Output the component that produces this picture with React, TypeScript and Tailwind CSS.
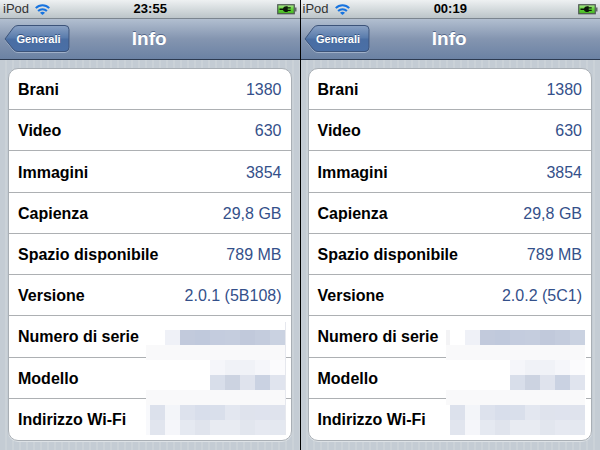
import { useId } from 'react'
import clsx from 'clsx'

interface Device {
  time: string
  version: string
  // mosaic cells hiding the private values, one class per 15px cell
  mosaic: string[][]
}

const ROWS_SHARED = [
  ['Brani', '1380'],
  ['Video', '630'],
  ['Immagini', '3854'],
  ['Capienza', '29,8 GB'],
  ['Spazio disponibile', '789 MB']
]

const W = 'bg-white'
const P = 'bg-[#f9f9fa]'

const pale = [P, P, P, P, P, P, P, P, P, P]
const modelTop = [W, W, W, W, W, 'bg-[#f5f6fa]', 'bg-[#f0f2f7]', 'bg-[#f0f2f7]', 'bg-[#f5f6fa]', 'bg-[#fbfbfd]']
const modelBottom = [W, W, W, W, W, 'bg-[#d8deea]', 'bg-[#ccd3e1]', 'bg-[#dfe3ed]', 'bg-[#cad2e2]', 'bg-[#e0e4ee]']
const wifiTop = ['bg-[#f8f9fc]', 'bg-[#dce1ec]', 'bg-[#f3f5f9]', 'bg-[#dde2ed]', 'bg-[#d8deeb]', 'bg-[#d9dfeb]', 'bg-[#e3e7f0]', 'bg-[#dfe3ed]', 'bg-[#dfe3ee]', 'bg-[#dfe3ed]']
const wifiBottom = ['bg-[#f8f9fc]', 'bg-[#e1e5ee]', 'bg-[#f5f6fa]', 'bg-[#e5e9f1]', 'bg-[#e0e4ed]', 'bg-[#e8ebf2]', 'bg-[#e8ebf2]', 'bg-[#e2e6ee]', 'bg-[#e6e9f1]', 'bg-[#e4e8f0]']
const serial = ['bg-[#eff1f7]', 'bg-[#c2cadc]', 'bg-[#c0c9dc]', 'bg-[#c4ccde]', 'bg-[#c5cdde]', 'bg-[#c1c9db]', 'bg-[#c4ccdd]', 'bg-[#cad2e1]']

const DEVICES: Device[] = [
  {
    time: '23:55',
    version: '2.0.1 (5B108)',
    mosaic: [[W, W, ...serial], pale, modelTop, modelBottom, pale, wifiTop, wifiBottom]
  },
  {
    time: '00:19',
    version: '2.0.2 (5C1)',
    mosaic: [['bg-[#f3f3f5]', W, ...serial], pale, modelTop, modelBottom, pale, [W, ...wifiTop.slice(1)], [W, ...wifiBottom.slice(1)]]
  }
]

function WifiIcon() {
  return (
    <svg width="15" height="11" viewBox="0 0 15 11" fill="none" stroke="#1673e0" strokeWidth="2" aria-label="Wi-Fi">
      <path d="M0.8 4.1C4.5 0.3 10.5 0.3 14.2 4.1" />
      <path d="M3.1 7C5.6 4.5 9.4 4.5 11.900 7" />
      <path d="M7.5 11L5 8.700C6.400 7.400 8.600 7.400 10 8.700Z" fill="#1673e0" stroke="none" />
    </svg>
  )
}

function BatteryIcon() {
  const id = useId()
  return (
    <svg width="20" height="11" viewBox="0 0 20 11" aria-label="Batteria in carica">
      <defs>
        <linearGradient id={id} x1="0" y1="0" x2="0" y2="1">
          <stop offset="0" stopColor="#b4ec96" />
          <stop offset="0.45" stopColor="#63d53a" />
          <stop offset="1" stopColor="#44b51f" />
        </linearGradient>
      </defs>
      <rect x="0.75" y="0.75" width="16.5" height="9" fill={`url(#${id})`} stroke="#4b5550" strokeWidth="1.2" />
      <path d="M18 3.5h1.5v4H18z" fill="#626a66" />
      <path d="M2.500 4.600h3.500c.6-1.500 1.700-2.300 3.200-2.300h1.500v1h3v1.200h-3v1.300h3V7h-3v1.100H9.200c-1.500 0-2.600-.8-3.200-2.200H2.500z" fill="#0b1608" />
    </svg>
  )
}

function BackButton() {
  const id = useId()
  return (
    <button type="button" className="relative h-7 w-[66px] pl-[3px] text-center text-[11px] font-bold text-white [text-shadow:0_-1px_0_#33507d]">
      <svg className="absolute inset-0" width="66" height="28" viewBox="0 0 66 28" aria-hidden="true">
        <defs>
          <linearGradient id={id} x1="0" y1="0" x2="0" y2="1">
            <stop offset="0" stopColor="#8ba2c4" />
            <stop offset="0.48" stopColor="#587bac" />
            <stop offset="0.52" stopColor="#4a6ea3" />
            <stop offset="1" stopColor="#4a6fa6" />
          </linearGradient>
        </defs>
        <path d="M1 15 9.500 3.500Q11.500 1.500 14 1.500H61Q65 1.500 65 5.500V23.500Q65 27.500 61 27.500H14Q11.500 27.500 9.500 25.500Z" fill="none" stroke="#a0b0c8" />
        <path
          d="M1 14 9.500 2.500Q11.500 .5 14 .5H61Q65 .5 65 4.500V22.500Q65 26.500 61 26.500H14Q11.500 26.500 9.500 24.500Z"
          fill={`url(#${id})`}
          stroke="#3c5379"
        />
      </svg>
      <span className="relative">Generali</span>
    </button>
  )
}

function InfoScreen({ device, divided }: { device: Device; divided: boolean }) {
  const rows = [
    ...ROWS_SHARED,
    ['Versione', device.version],
    ['Numero di serie', ''],
    ['Modello', ''],
    ['Indirizzo Wi-Fi', '']
  ]

  return (
    <section
      className={clsx(
        'flex min-w-0 flex-1 flex-col bg-[repeating-linear-gradient(90deg,#c4ccd4_0px_5px,#cbd2d8_5px_7px)]',
        divided && 'border-l border-black'
      )}
    >
      <div
        className={clsx(
          'grid h-[19px] grid-cols-3 items-center border-b border-[#7b858f] bg-linear-to-b from-[#eef1f2] to-[#bcc5c9] pr-[2px]',
          divided ? 'pl-[2px]' : 'pl-[3px]'
        )}
      >
        <div className="flex items-center gap-[6px] text-[13px] leading-4 text-[#333]">
          iPod
          <WifiIcon />
        </div>
        <div className="text-center text-[13px] leading-4 font-bold">{device.time}</div>
        <div className="flex justify-end">
          <BatteryIcon />
        </div>
      </div>

      <header
        className={clsx(
          'grid h-[41px] grid-cols-[66px_1fr_66px] items-center border-b border-[#2d3b52] bg-linear-to-b from-[#b2bfd0] via-[#8495b0] to-[#6b82a4] pr-[5px]',
          divided ? 'pl-[3px]' : 'pl-1'
        )}
      >
        <BackButton />
        <h1 className="text-center text-[19px] leading-6 font-bold text-white [text-shadow:0_-1px_0_#56688a]">Info</h1>
      </header>

      <main className={clsx('flex flex-1 flex-col pt-2 pr-2 pb-[9px]', divided ? 'pl-[7px]' : 'pl-2')}>
        <div className="relative flex flex-1 flex-col rounded-[10px] border border-[#a9afb5] bg-white shadow-[0_1px_0_#dde2e6]">
          <dl className="grid flex-1 auto-rows-fr divide-y divide-[#adb0b3]">
            {rows.map(([label, value]) => (
              <div key={label} className="flex items-center justify-between pt-[2px] pr-[9px] pl-[9px] text-[16px] leading-5">
                <dt className="font-bold">{label}</dt>
                <dd className="text-[#34508a]">{value}</dd>
              </div>
            ))}
          </dl>

          {/* Blurred serial, model and address */}
          <div
            className={clsx('absolute right-[5px] bottom-[5px] border-r bg-white pt-2', divided ? 'border-white' : 'border-[#e6e8ee]')}
            aria-hidden="true"
          >
            {device.mosaic.map((cells, y) => (
              <div key={y} className="grid h-[15px] grid-cols-[4px_repeat(9,15px)]">
                {cells.map((cell, x) => (
                  <span key={x} className={cell} />
                ))}
              </div>
            ))}
          </div>
        </div>
      </main>
    </section>
  )
}

export default function App() {
  return (
    <div className="flex min-h-screen font-['Liberation_Sans',Arial,sans-serif] text-black">
      {DEVICES.map((device, i) => (
        <InfoScreen key={device.time} device={device} divided={i > 0} />
      ))}
    </div>
  )
}
